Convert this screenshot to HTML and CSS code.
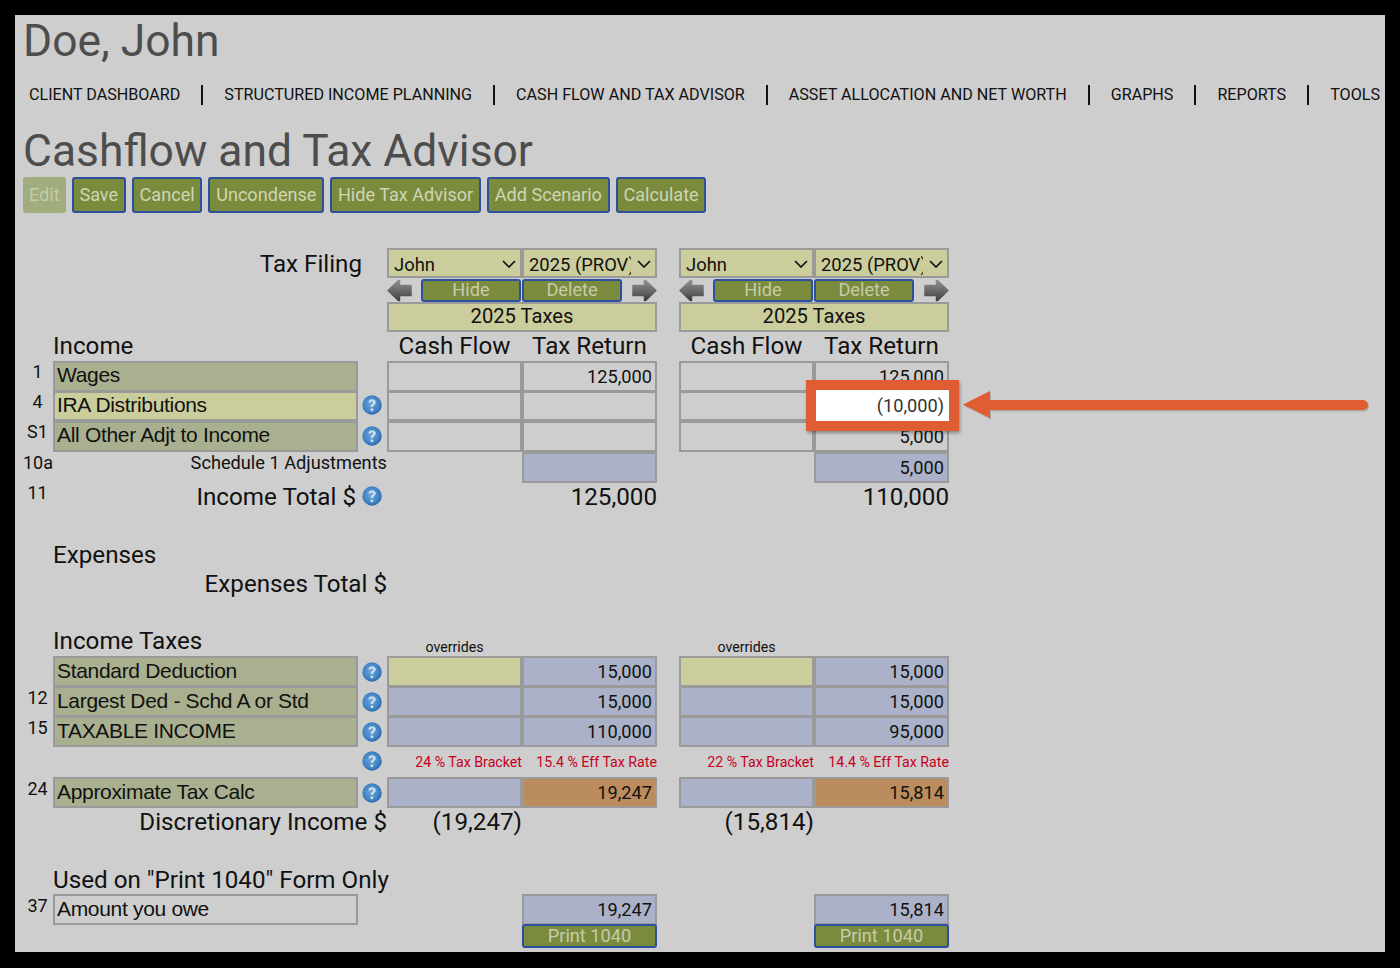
FILE: index.html
```html
<!DOCTYPE html>
<html lang="en">
<head>
<meta charset="utf-8">
<title>Cashflow and Tax Advisor</title>
<link rel="stylesheet" href="styles.css">
</head>
<body>
<svg class="defs" width="0" height="0" aria-hidden="true">
  <defs>
    <radialGradient id="helpFill" cx="45%" cy="45%" r="60%">
      <stop offset="0" stop-color="#6ea4d6"/>
      <stop offset=".7" stop-color="#3f82c4"/>
      <stop offset="1" stop-color="#1f5f9f"/>
    </radialGradient>
    <linearGradient id="navFill" x1="0" y1="0" x2="0" y2="1">
      <stop offset="0" stop-color="#8e8e8e"/>
      <stop offset=".55" stop-color="#666"/>
      <stop offset="1" stop-color="#3c3c3c"/>
    </linearGradient>
    <symbol id="help" viewBox="0 0 20 20">
      <circle cx="10" cy="10" r="9.700" fill="url(#helpFill)"/>
      <path d="M6.300 7.600c.2-2.200 1.700-3.400 3.800-3.400 2.200 0 3.700 1.300 3.700 3.100 0 2.500-2.700 2.600-2.700 4.700H8.700c0-3.100 2.400-3.100 2.400-4.500 0-.6-.4-1-1.100-1-.7 0-1.100.4-1.200 1.100z" fill="#c9dcee"/>
      <circle cx="9.900" cy="14.700" r="1.500" fill="#c9dcee"/>
    </symbol>
    <symbol id="arrowLeft" viewBox="0 0 25 23">
      <path d="M1 11.500 11.500 1.500h1v5H24v10H12.500v5h-1z" fill="url(#navFill)" stroke="url(#navFill)" stroke-width="1.500" stroke-linejoin="round"/>
    </symbol>
    <symbol id="arrowRight" viewBox="0 0 25 23">
      <path d="M24 11.500 13.500 1.500h-1v5H1v10h11.500v5h1z" fill="url(#navFill)" stroke="url(#navFill)" stroke-width="1.500" stroke-linejoin="round"/>
    </symbol>
    <symbol id="chev" viewBox="0 0 14 8">
      <path d="M1 1l6 6 6-6" fill="none" stroke="#111" stroke-width="1.700"/>
    </symbol>
  </defs>
</svg>

<main class="page">
  <h1 class="client">Doe, John</h1>
  <nav class="nav">
    <a>CLIENT DASHBOARD</a>
    <a>STRUCTURED INCOME PLANNING</a>
    <a>CASH FLOW AND TAX ADVISOR</a>
    <a>ASSET ALLOCATION AND NET WORTH</a>
    <a>GRAPHS</a>
    <a>REPORTS</a>
    <a>TOOLS</a>
  </nav>
  <h2 class="title">Cashflow and Tax Advisor</h2>
  <div class="toolbar">
    <button class="btn btn-off">Edit</button>
    <button class="btn">Save</button>
    <button class="btn">Cancel</button>
    <button class="btn">Uncondense</button>
    <button class="btn">Hide Tax Advisor</button>
    <button class="btn">Add Scenario</button>
    <button class="btn">Calculate</button>
  </div>

  <section class="sheet">
    <div class="row h30">
      <div class="lead-label big">Tax Filing</div>
      <div class="sel c1"><select><option>John</option></select><svg class="chev"><use href="#chev"/></svg></div>
      <div class="sel c2"><select><option>2025 (PROV)</option></select><svg class="chev"><use href="#chev"/></svg></div>
      <div class="sel c3"><select><option>John</option></select><svg class="chev"><use href="#chev"/></svg></div>
      <div class="sel c4"><select><option>2025 (PROV)</option></select><svg class="chev"><use href="#chev"/></svg></div>
    </div>
    <div class="row h24">
      <div class="ctl s1">
        <svg class="nav-arrow"><use href="#arrowLeft"/></svg>
        <button class="mini hide">Hide</button><button class="mini del">Delete</button>
        <svg class="nav-arrow"><use href="#arrowRight"/></svg>
      </div>
      <div class="ctl s2">
        <svg class="nav-arrow"><use href="#arrowLeft"/></svg>
        <button class="mini hide">Hide</button><button class="mini del">Delete</button>
        <svg class="nav-arrow"><use href="#arrowRight"/></svg>
      </div>
    </div>
    <div class="row h30">
      <div class="span-head s1">2025 Taxes</div>
      <div class="span-head s2">2025 Taxes</div>
    </div>
    <div class="row h29">
      <div class="section big">Income</div>
      <div class="colhead c1">Cash Flow</div><div class="colhead c2">Tax Return</div>
      <div class="colhead c3">Cash Flow</div><div class="colhead c4">Tax Return</div>
    </div>

    <div class="row h30 tight">
      <div class="num">1</div><div class="label green">Wages</div>
      <div class="cell c1"></div><div class="cell c2">125,000</div>
      <div class="cell c3"></div><div class="cell c4">125,000</div>
    </div>
    <div class="row h30 tight">
      <div class="num">4</div><div class="label yellow">IRA Distributions</div>
      <svg class="help"><use href="#help"/></svg>
      <div class="cell c1"></div><div class="cell c2"></div>
      <div class="cell c3"></div><div class="cell c4"></div>
    </div>
    <div class="row h30 tight">
      <div class="num">S1</div><div class="label green">All Other Adjt to Income</div>
      <svg class="help"><use href="#help"/></svg>
      <div class="cell c1"></div><div class="cell c2"></div>
      <div class="cell c3"></div><div class="cell c4">5,000</div>
    </div>
    <div class="row h30 gap-sched tight">
      <div class="num">10a</div><div class="sub-label">Schedule 1 Adjustments</div>
      <div class="cell blue c2">&nbsp;</div>
      <div class="cell blue c4">5,000</div>
    </div>
    <div class="row h30 tight">
      <div class="num">11</div><div class="total-label with-help">Income Total $</div>
      <svg class="help"><use href="#help"/></svg>
      <div class="total c2">125,000</div>
      <div class="total c4">110,000</div>
    </div>

    <div class="row h28 gap-expenses"><div class="section big">Expenses</div></div>
    <div class="row h28"><div class="total-label">Expenses Total $</div></div>

    <div class="row h28 gap-taxes">
      <div class="section big">Income Taxes</div>
      <div class="small-head c1">overrides</div>
      <div class="small-head c3">overrides</div>
    </div>
    <div class="row h30">
      <div class="label green">Standard Deduction</div>
      <svg class="help"><use href="#help"/></svg>
      <div class="cell yellow c1"></div><div class="cell blue c2">15,000</div>
      <div class="cell yellow c3"></div><div class="cell blue c4">15,000</div>
    </div>
    <div class="row h30">
      <div class="num">12</div><div class="label green">Largest Ded - Schd A or Std</div>
      <svg class="help"><use href="#help"/></svg>
      <div class="cell blue c1"></div><div class="cell blue c2">15,000</div>
      <div class="cell blue c3"></div><div class="cell blue c4">15,000</div>
    </div>
    <div class="row h30">
      <div class="num">15</div><div class="label green">TAXABLE INCOME</div>
      <svg class="help"><use href="#help"/></svg>
      <div class="cell blue c1"></div><div class="cell blue c2">110,000</div>
      <div class="cell blue c3"></div><div class="cell blue c4">95,000</div>
    </div>
    <div class="row h31 rates">
      <svg class="help"><use href="#help"/></svg>
      <div class="rate c1">24 % Tax Bracket</div><div class="rate c2">15.4 % Eff Tax Rate</div>
      <div class="rate c3">22 % Tax Bracket</div><div class="rate c4">14.4 % Eff Tax Rate</div>
    </div>
    <div class="row h30">
      <div class="num">24</div><div class="label green">Approximate Tax Calc</div>
      <svg class="help"><use href="#help"/></svg>
      <div class="cell blue c1"></div><div class="cell orange c2">19,247</div>
      <div class="cell blue c3"></div><div class="cell orange c4">15,814</div>
    </div>
    <div class="row h30">
      <div class="total-label">Discretionary Income $</div>
      <div class="total c1">(19,247)</div>
      <div class="total c3">(15,814)</div>
    </div>

    <div class="row h28 gap-print"><div class="section big wide">Used on "Print 1040" Form Only</div></div>
    <div class="row h30">
      <div class="num">37</div><div class="label plain">Amount you owe</div>
      <div class="cell blue c2">19,247</div>
      <div class="cell blue c4">15,814</div>
    </div>
    <div class="row h24">
      <button class="mini print c2">Print 1040</button>
      <button class="mini print c4">Print 1040</button>
    </div>
  </section>

  <div class="callout">(10,000)</div>
  <svg class="pointer" viewBox="0 0 410 34" width="410" height="34" aria-hidden="true">
    <path d="M0 16.500 27 3v9h373a5 5 0 0 1 0 10H27v8z" fill="#6b6b6b" opacity=".35" transform="translate(1 1.500)"/>
    <path d="M0 16.500 27 3v9h373a5 5 0 0 1 0 10H27v8z" fill="#e05c33"/>
  </svg>
</main>
</body>
</html>
```

FILE: styles.css
```css
* { box-sizing: border-box; }
html, body { margin: 0; height: 100%; }
body {
  background: #000;
  padding: 15px;
  height: 968px;
  overflow: hidden;
  font-family: Roboto, "Liberation Sans", sans-serif;
  color: #111;
}
.defs { position: absolute; }
.page {
  position: relative;
  height: 937px;
  background: #cecece;
  padding-left: 8px;
  overflow: hidden;
}
.client, .title {
  margin: 0;
  font-weight: 400;
  color: #4d4d4d;
  font-size: 44.4px;
  line-height: 52px;
}
.client { height: 52px; }
.nav {
  display: flex;
  align-items: center;
  height: 20px;
  margin: 18px 0 0 -8px;
  padding-left: 14px;
  white-space: nowrap;
  font-size: 16.14px;
  color: #111;
}
.nav a { padding-right: 21px; margin-right: 21px; border-right: 2px solid #111; line-height: 20px; }
.nav a:last-child { border-right: 0; margin: 0; padding: 0; }
.title { margin-top: 20px; height: 52px; }
.toolbar { display: flex; gap: 6px; height: 37px; }
.btn {
  height: 36px;
  padding: 0 5.75px;
  font: 18.1px/1 Roboto, sans-serif;
  color: #cfd5b4;
  background: #7b8b3e;
  border: 2px solid #2c4f9f;
  border-radius: 3px;
}
.btn-off { background: #a2ad7f; border: 0; padding: 0 6px; color: #c3caa6; }

.sheet { margin-top: 34px; }
.row {
  display: grid;
  grid-template-columns: 30px 305px 29px 135px 135px 22px 135px 135px;
  align-items: stretch;
}
.h31 { height: 31px; }
.h30 { height: 30px; }
.h29 { height: 29px; }
.h28 { height: 28px; }
.h24 { height: 24px; }
.gap-sched { margin-top: 1px; }
.gap-expenses { margin-top: 29px; }
.gap-taxes { margin-top: 31px; }
.gap-print { margin-top: 29px; }

.c1 { grid-column: 4; }
.c2 { grid-column: 5; }
.c3 { grid-column: 7; }
.c4 { grid-column: 8; }
.s1 { grid-column: 4 / 6; }
.s2 { grid-column: 7 / 9; }

.big { font-size: 24.2px; line-height: 28px; color: #111; }
.lead-label { grid-column: 1 / 4; justify-self: end; align-self: center; padding-right: 25px; padding-top: 2px; }
.section { grid-column: 2; white-space: nowrap; }
.section.wide { grid-column: 2 / 6; }
.gap-taxes .section { line-height: 26px; }
.colhead { text-align: center; font-size: 24.2px; line-height: 28px; }
.small-head { text-align: center; font-size: 14.2px; line-height: 16px; align-self: end; padding-bottom: 1px; }

.num { grid-column: 1; text-align: center; font-size: 18px; line-height: 24px; padding-right: 1px; }
.gap-sched .num, .tight:not(.gap-sched) > .num:only-of-type { line-height: 24px; }
.label {
  grid-column: 2;
  border: 2px solid #9a9a9a;
  font-family: "Liberation Sans", Arial, sans-serif;
  font-size: 21px;
  letter-spacing: -0.32px;
  line-height: 26px;
  padding-left: 2px;
  white-space: nowrap;
}
.tight .label { line-height: 24px; }
.tight .help { margin-top: -2px; }
.tight .num { line-height: 22px; }
.green { background: #a9b08f; }
.yellow { background: #cccd9c; }
.plain { background: transparent; }
.help { grid-column: 3; width: 20px; height: 20px; align-self: center; margin-left: 4px; }
.sub-label { grid-column: 2 / 4; text-align: right; font-size: 18.2px; line-height: 22px; white-space: nowrap; }
.total-label { grid-column: 1 / 4; text-align: right; font-size: 24.2px; line-height: 30px; white-space: nowrap; }
.total-label.with-help { grid-column: 2; margin-right: 2px; }
.total { text-align: right; font-size: 24.2px; line-height: 30px; }

.cell {
  border: 2px solid #9a9a9a;
  font-size: 18.2px;
  line-height: 27px;
  text-align: right;
  padding-right: 3px;
}
.cell.blue { background: #abb1c8; }
.cell.yellow { background: #cccd9c; }
.cell.orange { background: #bb8c5d; }

.rates { align-items: center; }
.rates .help { margin-top: -2px; }
.rate { color: #c8001e; font-size: 14.2px; text-align: right; white-space: nowrap; }

.sel { position: relative; }
.sel select {
  appearance: none;
  width: 100%;
  height: 100%;
  background: #cccd9c;
  border: 2px solid #9a9a9a;
  border-radius: 0;
  padding: 2px 24px 0 5px;
  font: 18.4px Roboto, sans-serif;
  color: #111;
}
.chev { position: absolute; right: 6px; top: 12px; width: 14px; height: 8px; }

.ctl { display: grid; grid-template-columns: 34px 100px 101px 1fr; align-items: center; }
.nav-arrow { width: 25px; height: 23px; }
.ctl .nav-arrow:last-child { justify-self: end; }
.mini {
  height: 23px;
  padding: 0;
  font: 18.2px/1 Roboto, sans-serif;
  color: #c6ccaa;
  background: #7b8b3e;
  border: 2px solid #2c4f9f;
  border-radius: 3px;
}
.del { width: 100px; justify-self: end; }
.print { height: 24px; }
.span-head {
  background: #cccd9c;
  border: 2px solid #9a9a9a;
  text-align: center;
  font-size: 20.2px;
  line-height: 24px;
}

.callout {
  position: absolute;
  left: 791px;
  top: 365px;
  width: 153px;
  height: 51px;
  border: 10px solid #e05c33;
  background: #fff;
  box-shadow: 1px 2px 3px rgba(0,0,0,.35);
  color: #333;
  font-size: 18.2px;
  line-height: 32px;
  text-align: right;
  padding-right: 5px;
}
.pointer { position: absolute; left: 948px; top: 373px; }
```
